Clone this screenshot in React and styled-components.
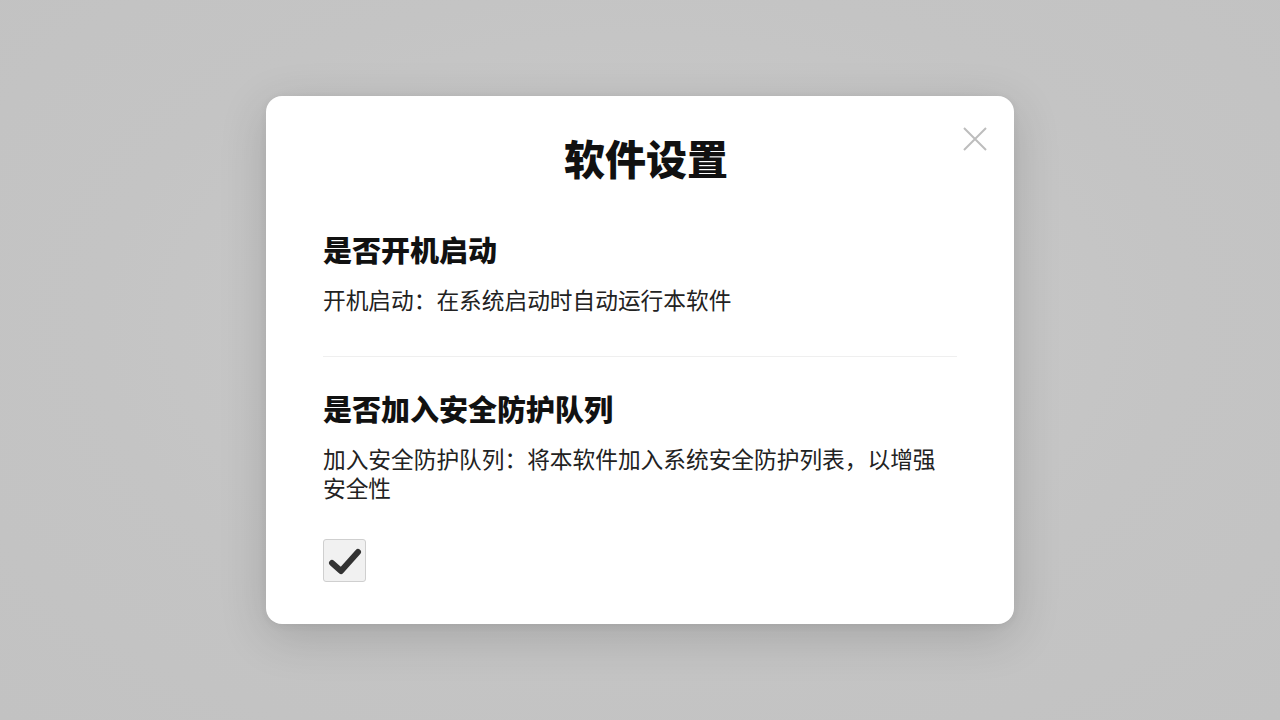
import React, { useState } from 'react';
import styled, { createGlobalStyle } from 'styled-components';

const GlobalStyle = createGlobalStyle`
  html, body, #root {
    margin: 0;
    height: 100%;
  }
  body {
    background: radial-gradient(ellipse at 50% 45%, #cbcbcb 0%, #c4c4c4 60%, #c2c2c2 100%);
    font-family: "Noto Sans CJK SC", "Noto Sans", sans-serif;
  }
`;

const Backdrop = styled.div`
  height: 100%;
  display: flex;
  align-items: center;
  justify-content: center;
`;

const Dialog = styled.div`
  position: relative;
  width: 748px;
  box-sizing: border-box;
  padding: 31px 57px 42px;
  background: #fff;
  border-radius: 16px;
  box-shadow: 0 12px 48px rgba(0, 0, 0, 0.16), 0 2px 8px rgba(0, 0, 0, 0.06);
`;

const Title = styled.h1`
  margin: 0 0 42px;
  padding-left: 12px;
  text-align: center;
  font-size: 41px;
  line-height: 60px;
  font-weight: 900;
  color: #111;
`;

const CloseButton = styled.button`
  position: absolute;
  top: 27px;
  right: 23px;
  width: 32px;
  height: 32px;
  padding: 0;
  border: none;
  background: none;
  cursor: pointer;
  display: flex;
  align-items: center;
  justify-content: center;
`;

const Section = styled.section`
  padding: ${p => (p.$first ? '0 0 42px' : '31px 0 0')};
  border-bottom: ${p => (p.$first ? '1px solid #efefef' : 'none')};
`;

const Heading = styled.h2`
  margin: 0 0 16px;
  font-size: 29px;
  line-height: 40px;
  font-weight: 900;
  color: #111;
`;

const Description = styled.p`
  margin: 0;
  max-width: 625px;
  font-size: 22.7px;
  line-height: 29px;
  color: #222;
`;

const CheckBox = styled.button`
  margin-top: 37px;
  width: 43px;
  height: 43px;
  padding: 0;
  box-sizing: border-box;
  border: 1px solid #cfcfcf;
  border-radius: 3px;
  background: #f1f1f1;
  display: flex;
  align-items: center;
  justify-content: center;
  cursor: pointer;
`;

function CloseIcon() {
  return (
    <svg width="24" height="24" viewBox="0 0 24 24" fill="none">
      <path d="M1 1L23 23M23 1L1 23" stroke="#bdbdbd" strokeWidth="2" />
    </svg>
  );
}

function CheckIcon() {
  return (
    <svg width="34" height="30" viewBox="0 0 34 30" fill="none">
      <path
        d="M4 17L13 25L30 6"
        stroke="#333"
        strokeWidth="6"
        strokeLinecap="round"
        strokeLinejoin="round"
      />
    </svg>
  );
}

export default function App() {
  const [protect, setProtect] = useState(true);

  return (
    <>
      <GlobalStyle />
      <Backdrop>
        <Dialog>
          <CloseButton aria-label="关闭">
            <CloseIcon />
          </CloseButton>
          <Title>软件设置</Title>

          <Section $first>
            <Heading>是否开机启动</Heading>
            <Description>开机启动：在系统启动时自动运行本软件</Description>
          </Section>

          <Section>
            <Heading>是否加入安全防护队列</Heading>
            <Description>
              加入安全防护队列：将本软件加入系统安全防护列表，以增强安全性
            </Description>
            <CheckBox onClick={() => setProtect(v => !v)} aria-pressed={protect}>
              {protect && <CheckIcon />}
            </CheckBox>
          </Section>
        </Dialog>
      </Backdrop>
    </>
  );
}
